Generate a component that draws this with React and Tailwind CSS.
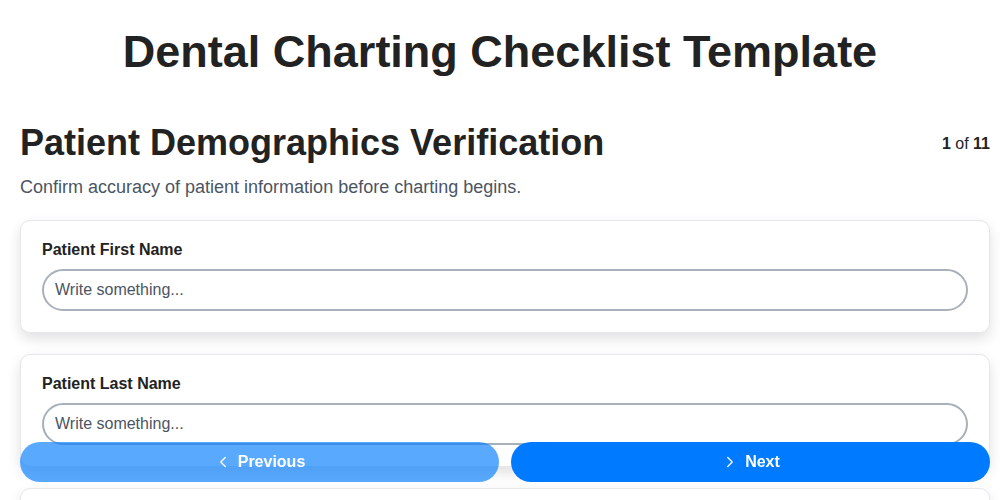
import { ChevronLeft, ChevronRight } from "lucide-react";

const fields = ["Patient First Name", "Patient Last Name", "Date of Birth"];

export default function App() {
  return (
    <div className="min-h-screen bg-white text-[#222] font-['Liberation_Sans',Arial,sans-serif]">
      <h1 className="pt-[26px] text-center text-[45px] font-bold leading-[52px]">
        Dental Charting Checklist Template
      </h1>

      <div className="pl-[20px] pr-[10px] pt-[44px]">
        <div className="flex items-start justify-between">
          <h2 className="text-[36px] font-bold leading-[42px]">
            Patient Demographics Verification
          </h2>
          <div className="pt-[10px] text-[16px]">
            <span className="font-bold">1</span> of <span className="font-bold">11</span>
          </div>
        </div>
        <p className="mt-[10px] text-[18px] text-[#4b5563]">
          Confirm accuracy of patient information before charting begins.
        </p>

        <div className="mt-[19px] flex flex-col gap-[21px] pb-[80px]">
          {fields.map((f) => (
            <div
              key={f}
              className="rounded-[10px] border border-[#e5e7eb] bg-white px-[21px] pt-[20px] pb-[21px] shadow-[0_6px_14px_rgba(0,0,0,0.12)]"
            >
              <label className="block text-[16px] font-bold leading-[18px]">{f}</label>
              <input
                type="text"
                placeholder="Write something..."
                className="mt-[10px] block h-[42px] w-full rounded-full border-2 border-[#a8b0ba] px-[11px] text-[16px] text-[#333] placeholder:text-[#4b5563] outline-none"
              />
            </div>
          ))}
        </div>
      </div>

      <div className="fixed bottom-[18px] left-[20px] right-[10px] flex gap-[12px]">
        <button className="flex h-[40px] flex-1 items-center justify-center gap-[6px] rounded-full bg-[#007bff]/65 text-[16px] font-bold text-white">
          <ChevronLeft size={18} strokeWidth={1.75} />
          Previous
        </button>
        <button className="flex h-[40px] flex-1 items-center justify-center gap-[6px] rounded-full bg-[#007bff] text-[16px] font-bold text-white">
          <ChevronRight size={18} strokeWidth={1.75} />
          Next
        </button>
      </div>
    </div>
  );
}
